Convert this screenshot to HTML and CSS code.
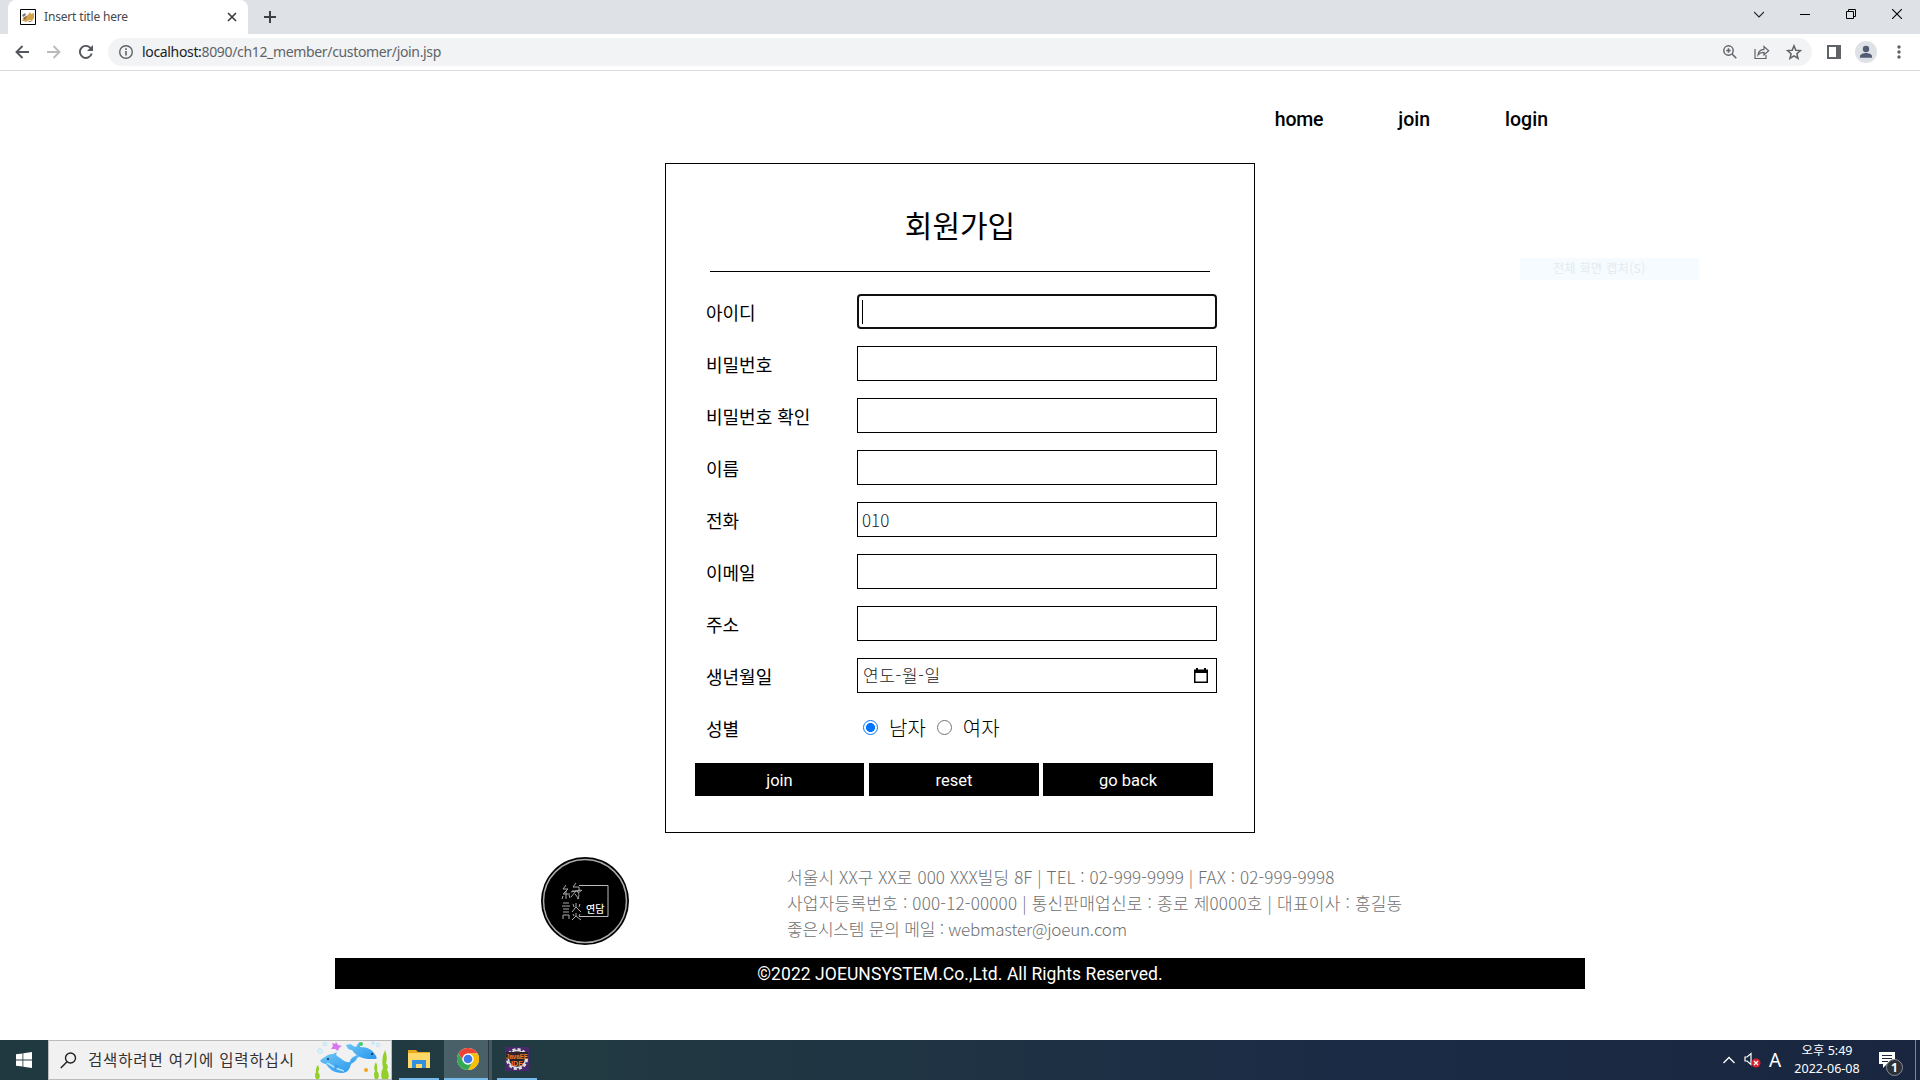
FILE: index.html
```html
<!DOCTYPE html>
<html lang="ko">
<head>
<meta charset="utf-8">
<title>Insert title here</title>
<link rel="stylesheet" href="styles.css">
</head>
<body>
<div class="tabstrip">
  <div class="tab">
    <svg class="favicon" width="16" height="16" viewBox="0 0 16 16"><path d="M.5.500h15v15H.5z" fill="#fff" stroke="#000"/><path d="M2 12l2-4 4-2 2-3 1 2 3-1v5l-2 3-3-1-3 2-2-1z" fill="#d2a24c"/><path d="M2 6l3-2 1 2-3 2zM9 12l4 1H8z" fill="#777"/><path d="M3 9l4-2-2 4z" fill="#8b6a4a"/></svg>
    <span class="tab-title">Insert title here</span>
    <svg class="tab-close" width="10" height="10" viewBox="0 0 10 10"><path d="M1 1l8 8M9 1L1 9" stroke="#3c4043" stroke-width="1.700" fill="none"/></svg>
  </div>
  <svg class="newtab" width="12" height="12" viewBox="0 0 12 12"><path d="M6 0v12M0 6h12" stroke="#3c4043" stroke-width="2"/></svg>
  <div class="window-controls">
    <svg width="10" height="10" viewBox="0 0 10 10"><path d="M0 3l5 5 5-5" fill="none" stroke="#222" stroke-width="1.100"/></svg>
    <svg width="10" height="10" viewBox="0 0 10 10"><path d="M0 5.500h10" stroke="#000"/></svg>
    <svg width="10" height="10" viewBox="0 0 10 10"><path d="M.5 2.500h7v7h-7zM2.500 2.500v-2h7v7h-2" fill="none" stroke="#000"/></svg>
    <svg width="10" height="10" viewBox="0 0 10 10"><path d="M0 0l10 10M10 0L0 10" stroke="#000" stroke-width="1.100"/></svg>
  </div>
</div>
<div class="toolbar">
  <div class="nav-icons">
    <svg width="14" height="14" viewBox="0 0 14 14"><path d="M14 7H1.500M7.500 1L1.500 7l6 6" fill="none" stroke="#54575b" stroke-width="1.900"/></svg>
    <svg width="14" height="14" viewBox="0 0 14 14"><path d="M0 7h12.500M6.500 1l6 6-6 6" fill="none" stroke="#b9bbbd" stroke-width="1.900"/></svg>
    <svg width="14" height="14" viewBox="0 0 14 14"><path d="M12.700 8.500A6 6 0 1 1 11.300 2.800L12.500 4" fill="none" stroke="#54575b" stroke-width="1.900"/><path d="M14 0v6H8z" fill="#54575b"/></svg>
  </div>
  <div class="omnibox">
    <svg width="14" height="14" viewBox="0 0 14 14"><circle cx="7" cy="7" r="6.300" fill="none" stroke="#5f6368" stroke-width="1.400"/><path d="M6.200 6h1.600v4.500H6.200zM6.200 3.300h1.600v1.600H6.200z" fill="#5f6368"/></svg>
    <span class="url"><b>localhost:</b>8090/ch12_member/customer/join.jsp</span>
    <div class="omni-icons">
      <svg width="16" height="16" viewBox="0 0 16 16"><circle cx="6.500" cy="6.500" r="4.700" fill="none" stroke="#5f6368" stroke-width="1.400"/><path d="M10 10l4.300 4.300M4.300 6.500h4.400M6.500 4.300v4.400" stroke="#5f6368" stroke-width="1.500"/></svg>
      <svg width="16" height="16" viewBox="0 0 16 16"><path d="M1 5v9.500h11V11" fill="none" stroke="#5f6368" stroke-width="1.200"/><path d="M4 11c.5-4 2.500-5.500 6-5.700V2.500l4.700 4.300L10 11V8.300C7.300 8.300 5.500 9 4 11z" fill="none" stroke="#5f6368" stroke-width="1.200"/></svg>
      <svg width="16" height="16" viewBox="0 0 16 16"><path d="M8 1.800l1.800 4.400 4.700.4-3.600 3.100 1.100 4.600L8 11.800l-4 2.500 1.100-4.600L1.500 6.600l4.700-.4z" fill="none" stroke="#5f6368" stroke-width="1.500"/></svg>
    </div>
  </div>
  <svg class="side" width="14" height="14" viewBox="0 0 14 14"><path d="M0 0h14v14H0zM2 2v10h7V2z" fill="#5f6368" fill-rule="evenodd"/></svg>
  <svg class="avatar" width="22" height="22" viewBox="0 0 22 22"><circle cx="11" cy="11" r="11" fill="#dee1e6"/><circle cx="11" cy="8" r="3.200" fill="#525c74"/><path d="M5 16.800v-1.500c0-2.200 4-3.300 6-3.300s6 1.100 6 3.300v1.500z" fill="#525c74"/></svg>
  <svg class="dots" width="4" height="14" viewBox="0 0 4 14"><g fill="#5f6368"><circle cx="2" cy="2" r="1.700"/><circle cx="2" cy="7" r="1.700"/><circle cx="2" cy="12" r="1.700"/></g></svg>
</div>

<main class="page">
  <nav class="menu"><a class="m-home">home</a><a class="m-join">join</a><a class="m-login">login</a></nav>
  <form class="panel">
    <h1>회원가입</h1>
    <div class="rule"></div>
    <div class="row"><label>아이디</label><div class="field focused"><i class="caret"></i></div></div>
    <div class="row"><label>비밀번호</label><div class="field"></div></div>
    <div class="row"><label>비밀번호 확인</label><div class="field"></div></div>
    <div class="row"><label>이름</label><div class="field"></div></div>
    <div class="row"><label>전화</label><div class="field">010</div></div>
    <div class="row"><label>이메일</label><div class="field"></div></div>
    <div class="row"><label>주소</label><div class="field"></div></div>
    <div class="row"><label>생년월일</label><div class="field date"><span>연도-월-일</span><svg width="14" height="15" viewBox="0 0 14 15"><path d="M0 1.500h2V0h2v1.500h6V0h2v1.500h2V15H0zM1.500 5v8.500h11V5z" fill="#000" fill-rule="evenodd"/></svg></div></div>
    <div class="row"><label>성별</label><div class="radios"><i class="radio on"></i><span>남자</span><i class="radio"></i><span>여자</span></div></div>
    <div class="buttons"><div class="btn">join</div><div class="btn">reset</div><div class="btn">go back</div></div>
  </form>
  <footer>
    <div class="info">
      <svg class="logo" width="88" height="88" viewBox="0 0 88 88"><circle cx="44" cy="44" r="44" fill="#000"/><circle cx="44" cy="44" r="41.500" fill="none" stroke="#aaa" stroke-width="1.500"/><path d="M38 28.500h29v31H38" fill="none" stroke="#bbb"/><g fill="none" stroke="#aaa" stroke-width="1"><path d="M25 28l-3 4h5l-5 5h7M25 34v8M22 39l-1 3M28 38l1 3M35 26l-3 4h6v4h-7M30 35l10-2M35 34l-5 6M34 37l4 5M37 36l4-3M36 34c3 3 2 7 0 8M22 46h6M21 49h8M22 52h6M22 55h6M22 62v-4h6v4"/><path d="M35 46v4l-4 5M35 50l5 5M32 47l1 3M39 47l-1 3M35 56v3l-4 4M35 59l5 4M32 57l1 2M39 57l-1 2"/></g><text x="45" y="56" class="logo-text">연담</text></svg>
      <div class="address"><p class="a1">서울시 XX구 XX로 000 XXX빌딩 8F | TEL : 02-999-9999 | FAX : 02-999-9998</p><p class="a2">사업자등록번호 : 000-12-00000 | 통신판매업신로 : 종로 제0000호 | 대표이사 : 홍길동</p><p class="a3">좋은시스템 문의 메일 : webmaster@joeun.com</p></div>
    </div>
    <div class="copyright"><span>©2022 JOEUNSYSTEM.Co.,Ltd. All Rights Reserved.</span></div>
  </footer>
  <div class="ghost">전체 화면 캡처(S)</div>
</main>

<div class="taskbar">
  <div class="start"><svg width="16" height="16" viewBox="0 0 16 16"><path d="M0 2.300L6.500 1.400v6.200H0zM7.300 1.300L16 0v7.600H7.300zM0 8.400h6.500v6.200L0 13.700zM7.300 8.400H16V16l-8.700-1.300z" fill="#fff"/></svg></div>
  <div class="search">
    <svg class="mag" width="17" height="17" viewBox="0 0 17 17"><circle cx="10.500" cy="6" r="5" fill="none" stroke="#222" stroke-width="1.400"/><path d="M7 9.700L.8 16" stroke="#222" stroke-width="1.500"/></svg>
    <span>검색하려면 여기에 입력하십시</span>
    <svg class="fish" width="76" height="38" viewBox="0 0 76 38">
      <defs><linearGradient id="blue" x1="0" y1="0" x2="1" y2="1"><stop offset="0" stop-color="#6fc8f8"/><stop offset="1" stop-color="#2795ec"/></linearGradient></defs>
      <path d="M5 20c1-2 3-3 5-4 2-2 5-3 8-3l4-2c-1 2-1 3 0 4 5 3 8 7 13 6 0-3 2-5 8-5-2 2-2 4-4 5l-3 2c-1 5-4 9-9 9-8 0-13-4-16-9-2 0-4-1-6-3z" fill="url(#blue)"/><path d="M12 22c5 2 8 6 17 8" fill="none" stroke="#a8e0ff" stroke-width="1.500"/><path d="M19 23l1 6 4-4z" fill="#3d9fe9"/>
      <path d="M31 4c3-1 6-1 7 1l3 1c1-2 2-4 4-5l0 5c8 0 13 3 16 9 1 2 1 3-1 3l-6 0c-7 0-14-4-17-9-3 0-5-2-6-5z" fill="url(#blue)"/><path d="M42 14l-6 3 9-1z" fill="#54b5f5"/><circle cx="13" cy="18" r="1" fill="#124"/><circle cx="57" cy="13" r="1" fill="#124"/>
      <path d="M21 1l2 3 4 1-3 2-1 3-3-2-4 0 2-3-1-3 3 1z" fill="#d876ee"/><circle cx="46" cy="3" r="2" fill="#43cf70"/><circle cx="51" cy="29" r="2" fill="#f3a51f"/><g fill="#d8efff" stroke="#add8f5" stroke-width=".5"><circle cx="10" cy="3" r="2"/><circle cx="5" cy="10" r="2.500"/><circle cx="58" cy="2" r="1.300"/><circle cx="63" cy="4" r="2"/></g>
      <path d="M1 38q-2-4 0-7-1-4 2-7 2 4 0 7 3 3 1 7zM60 38q-2-5 0-8-2-4 1-9 2 5 1 9 3 3 1 8zM67 38q-2-6 1-11-2-10 2-18 3 7 1 13 3 3 1 7 3 4 1 9z" fill="#92cf28"/>
    </svg>
  </div>
  <div class="app explorer"><svg width="22" height="20" viewBox="0 0 22 20"><path d="M0 1h8l2 2h12v16H0z" fill="#e8a91d"/><path d="M0 4h22v15H0z" fill="#ffd868"/><path d="M4 19v-8h14v8h-4v-4H8v4z" fill="#3290df"/></svg></div>
  <div class="app chrome"><svg width="22" height="22" viewBox="0 0 48 48"><circle cx="24" cy="24" r="24" fill="#fff"/><path d="M24 12h20.800A24 24 0 0 0 3.200 12l10.400 18A12 12 0 0 1 24 12z" fill="#ea4335"/><path d="M34.400 30L24 48A24 24 0 0 0 44.800 12H24a12 12 0 0 1 10.400 18z" fill="#fbbc04"/><path d="M13.600 30L3.200 12A24 24 0 0 0 24 48l10.400-18a12 12 0 0 1-20.800 0z" fill="#34a853"/><circle cx="24" cy="24" r="12" fill="#fff"/><circle cx="24" cy="24" r="9.500" fill="#3b78e7"/></svg></div>
  <div class="stack"></div>
  <div class="app ide"><svg width="24" height="24" viewBox="0 0 24 24"><path d="M0 0h24v24H0z" fill="#49286d"/><circle cx="12" cy="12" r="9.500" fill="none" stroke="#ddd" stroke-width="3" stroke-dasharray="3 2"/><circle cx="12" cy="12" r="8.500" fill="#25202a" stroke="#ddd" stroke-width="1.500"/><path d="M1 5h22v7H1z" fill="#33222e"/><text x="1" y="11.500" class="ide-text" textLength="22" lengthAdjust="spacingAndGlyphs">JavaEE</text><text x="6" y="19" class="ide-text" textLength="12" lengthAdjust="spacingAndGlyphs">IDE</text></svg></div>
  <div class="tray">
    <svg class="up" width="12" height="8" viewBox="0 0 12 8"><path d="M.5 7L6 1.500 11.500 7" fill="none" stroke="#fff" stroke-width="1.300"/></svg>
    <svg class="speaker" width="18" height="18" viewBox="0 0 18 18"><path d="M1 6h2l4-3.500v11L3 10H1z" fill="none" stroke="#fff" stroke-width="1.200"/><circle cx="12" cy="12" r="4.500" fill="#d9202a"/><path d="M10 10l4 4M14 10l-4 4" stroke="#fff" stroke-width="1.300"/></svg>
    <span class="ime">A</span>
    <div class="clock"><span>오후 5:49</span><span>2022-06-08</span></div>
    <svg class="notice" width="26" height="26" viewBox="0 0 26 26"><path d="M0 0h16v12h-8l-4 4v-4H0z" fill="#fff"/><path d="M3 3.500h10M3 6.500h10M3 9.500h6" stroke="#1a2742"/><circle cx="15.500" cy="15.500" r="8" fill="#2c3138" stroke="#878c94"/><text x="12" y="20" class="badge-text">1</text></svg>
  </div>
</div>
</body>
</html>
```
FILE: styles.css
```css
* { box-sizing: border-box; }
body { margin: 0; width: 1920px; height: 1080px; overflow: hidden; display: flex; flex-direction: column; background: #fff; color: #000; font-family: "Noto Sans CJK KR", sans-serif; }
svg { display: block; flex: none; }
.tabstrip { height: 34px; background: #dee1e6; display: flex; align-items: flex-start; padding-left: 8px; }
.tab { width: 240px; height: 34px; background: #fff; border-radius: 8px 8px 0 0; display: flex; padding: 9px 11px 0 12px; }
.tab-title { margin: -1px 0 0 8px; flex: 1; font: 12px/18px "Noto Sans", "Noto Sans CJK KR", sans-serif; letter-spacing: -.17px; color: #45484c; white-space: nowrap; }
.tab-close { margin-top: 3px; }
.newtab { margin: 11px 0 0 16px; }
.window-controls { margin: 9px 18px 0 auto; display: flex; gap: 36px; }
.toolbar { height: 37px; border-bottom: 1px solid #d9dbde; display: flex; align-items: center; padding-left: 15px; }
.nav-icons { display: flex; gap: 18px; width: 93px; }
.omnibox { width: 1704px; height: 28px; border-radius: 14px; background: #f1f3f4; display: flex; align-items: center; padding: 0 10px 0 11px; }
.url { margin-left: 9px; font: 14px/20px "Noto Sans", sans-serif; letter-spacing: -.34px; color: #5f6368; white-space: nowrap; }
.url b { font-weight: 400; color: #202124; }
.omni-icons { margin-left: auto; display: flex; gap: 16px; }
.side { margin-left: 15px; }
.avatar { margin-left: 14px; }
.dots { margin-left: 20px; }
.page { height: 969px; position: relative; display: flex; flex-direction: column; align-items: center; }
.menu { width: 1250px; height: 92px; display: flex; justify-content: flex-end; padding: 35px 37px 0 0; gap: 75px; font: 500 19.500px/28px Roboto, sans-serif; }
.m-home { letter-spacing: -.2px; }
.panel { width: 590px; height: 670px; border: 1px solid #000; padding: 38px 0 0; display: flex; flex-direction: column; }
h1 { margin: 0; height: 69px; font-size: 30px; line-height: 44px; font-weight: 400; text-align: center; }
.rule { width: 500px; height: 1px; margin: 0 44px 22px; background: #000; }
.row { height: 35px; margin: 0 37px 17px 40px; display: flex; }
.row label { width: 151px; font-size: 18px; line-height: 37px; white-space: nowrap; }
.field { width: 360px; height: 35px; border: 1px solid #000; padding: 0 4px; display: flex; align-items: center; font-size: 17px; line-height: 33px; font-weight: 300; color: #222; }
.focused { border: 2px solid #101010; border-radius: 4px; padding: 0 3px; }
.caret { width: 1px; height: 24px; background: #000; }
.date { justify-content: space-between; padding: 0 8px 0 5px; }
.date span { letter-spacing: .65px; margin-top: -2px; }
.radios { display: flex; align-items: center; padding-left: 6px; font-size: 20px; font-weight: 300; line-height: 35px; }
.radios span { margin: 0 11px 0 11px; }
.radio { width: 15px; height: 15px; margin-top: -1px; border: 1px solid #767676; border-radius: 50%; flex: none; }
.radio.on { border: 1.500px solid #0075ff; background: radial-gradient(circle, #0075ff 4.200px, #fff 4.800px); }
.buttons { display: flex; gap: 5px; padding-left: 29px; margin-top: 1px; }
.btn { width: 169px; height: 33px; background: #000; color: #fff; text-align: center; font: 16.500px/36px Roboto, sans-serif; }
.btn + .btn { width: 170px; }
.btn + .btn + .btn { margin-left: -1px; }
footer { width: 1250px; }
.info { height: 125px; display: flex; padding: 24px 0 0 206px; }
.address { margin: 7px 0 0 158px; color: #707070; }
.address p { margin: 0; font: 300 17px/26px "Noto Sans CJK KR", sans-serif; white-space: nowrap; }
.address .a1 { letter-spacing: .1px; }
.address .a2 { letter-spacing: .21px; }
.address .a3 { letter-spacing: -.2px; }
.logo-text { font: 500 10px "Noto Sans CJK KR", sans-serif; fill: #fff; }
.copyright { height: 31px; background: #000; color: #fff; text-align: center; font: 17.500px/32px Roboto, sans-serif; letter-spacing: .07px; }
.ghost { position: absolute; left: 1520px; top: 187px; width: 179px; height: 22px; background: #f5fbff; padding-left: 33px; font-size: 12px; line-height: 20px; letter-spacing: .4px; color: #e5eaed; white-space: nowrap; }
.taskbar { height: 40px; display: flex; background: linear-gradient(90deg, #20383f, #223a42 30%, #1b2b45 70%, #1a2640); }
.start { width: 48px; padding: 12px 0 0 16px; }
.search { width: 344px; height: 40px; background: #f1f1f1; border: 1px solid #bbb; display: flex; align-items: center; font-size: 15.500px; color: #333; white-space: nowrap; }
.mag { margin: 0 11px 0 11px; }
.search span { width: 227px; letter-spacing: .85px; margin-top: -2px; }
.app { height: 40px; border-bottom: 2px solid #76b9ed; display: flex; align-items: center; justify-content: center; }
.explorer { width: 40px; margin-left: 7px; }
.chrome { width: 44px; margin-left: 5px; background: #4a6068; padding-left: 4px; }
.stack { width: 4px; background: #455860; border-left: 1px solid #25383e; }
.ide { width: 40px; margin-left: 5px; }
.ide-text { font: 700 7px "Liberation Sans", sans-serif; fill: #f47a20; }
.tray { margin-left: auto; display: flex; width: 197px; color: #fff; }
.up { margin-top: 16px; }
.speaker { margin: 11px 0 0 9px; }
.ime { margin: 0 0 0 7px; width: 25px; font: 19px/40px "Noto Sans", sans-serif; }
.clock { width: 66px; display: flex; flex-direction: column; align-items: center; font: 12.500px/18px "Noto Sans", "Noto Sans CJK KR", sans-serif; letter-spacing: 0; padding-top: 2px; white-space: nowrap; }
.notice { margin: 12px 0 0 19px; }
.tray::after { content: ""; width: 1px; height: 40px; margin-left: 10px; background: #7b8493; }
.badge-text { font: 700 12px "Noto Sans", sans-serif; fill: #fff; }
```
